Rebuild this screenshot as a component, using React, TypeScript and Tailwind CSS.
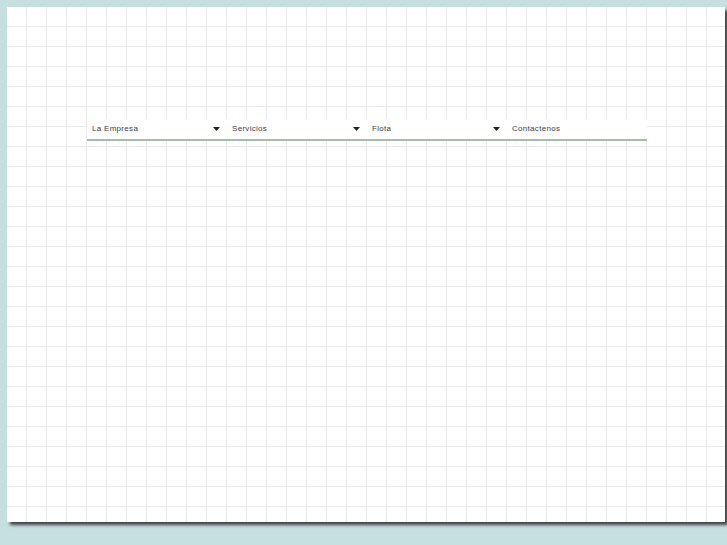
const items = [
  { label: "La Empresa", drop: true },
  { label: "Servicios", drop: true },
  { label: "Flota", drop: true },
  { label: "Contactenos", drop: false },
];

export default function App() {
  return (
    <div className="w-[727px] h-[545px] bg-[#c6dfe0] pt-[7px] pl-[7px] font-['Liberation_Sans',Arial,sans-serif]">
      <div className="w-[718px] h-[515px] bg-white bg-[linear-gradient(to_right,transparent_19px,#eaeaea_19px),linear-gradient(to_bottom,transparent_19px,#eaeaea_19px)] bg-[size:20px_20px] shadow-[3px_3px_3px_#3c4442] pt-[112px] pl-[80px]">
        <nav className="flex w-[560px] h-[22px] bg-white border-b-2 border-[#a3bda6]">
          {items.map((it) => (
            <div
              key={it.label}
              className="flex items-center justify-between w-[140px] pl-[5px] pr-[7px] text-[8px] tracking-[0.3px] text-[#404040]"
            >
              <span>{it.label}</span>
              {it.drop && (
                <svg width="7" height="4" viewBox="0 0 7 4" className="mb-[1px]">
                  <path d="M0 0H7L3.5 4Z" fill="#222" />
                </svg>
              )}
            </div>
          ))}
        </nav>
      </div>
    </div>
  );
}
